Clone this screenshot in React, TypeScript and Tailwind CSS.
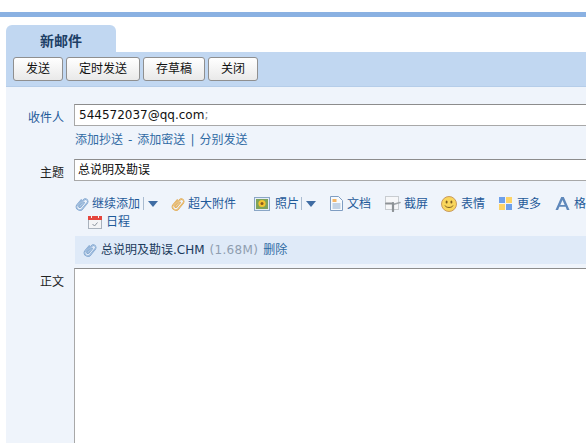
import type { ReactNode } from "react";

const font = "font-['DejaVu_Sans','Noto_Sans_CJK_SC',sans-serif]";

function Clip({ color = "#d5e3f3", dark = "#6f99c8" }: { color?: string; dark?: string }) {
  const d = "M1.5 4.5v6.2a3.2 3.2 0 0 0 6.4 0V3a2.3 2.3 0 0 0-4.6 0v7a1 1 0 0 0 2 0V4.5";
  return (
    <svg width="14" height="16" viewBox="0 0 14 16" fill="none" className="shrink-0">
      <g transform="translate(2.4 1.2) rotate(40 5 7)">
        <path d={d} stroke={dark} strokeWidth="1.5" strokeLinecap="round" />
        <path d={d} stroke={color} strokeWidth="0.5" strokeLinecap="round" />
      </g>
    </svg>
  );
}

function Caret({ barGap }: { barGap: string }) {
  return (
    <span className="flex items-center">
      <span className={`${barGap} mr-[3px] h-[13px] w-px bg-[#a9bbd0]`} />
      <svg width="10" height="6" viewBox="0 0 10 6" className="ml-[1px]">
        <path d="M0 0h10L5 6z" fill="#3f6ca3" />
      </svg>
    </span>
  );
}

function Photo() {
  return (
    <svg width="16" height="14" viewBox="0 0 16 14" className="shrink-0">
      <rect x="0.5" y="0.5" width="15" height="13" fill="#e6eef7" stroke="#8aa6c6" />
      <rect x="2" y="2" width="12" height="10" fill="#7fa35a" />
      <circle cx="8" cy="6.5" r="3.6" fill="#f4c430" />
      <circle cx="8" cy="6.5" r="1.5" fill="#8a5a1c" />
    </svg>
  );
}

function Doc() {
  return (
    <svg width="13" height="15" viewBox="0 0 13 15" className="shrink-0">
      <path d="M.5.5h8l4 4v10H.5z" fill="#f7fafd" stroke="#7f9dc2" />
      <rect x="2.5" y="3" width="4" height="3" fill="#f5b565" />
      <path d="M2.5 8h8M2.5 10h8M2.5 12h8" stroke="#8fabcc" />
    </svg>
  );
}

function Scissors() {
  return (
    <svg width="16" height="16" viewBox="0 0 16 16" className="shrink-0">
      <rect x="0.5" y="0.5" width="13" height="13" fill="#f6f7f9" stroke="#c8ccd0" />
      <path d="M1 7.5h7" stroke="#8d9296" strokeWidth="2" strokeLinecap="round" />
      <path d="M8 8.5 15 6.5" stroke="#a0a5a9" strokeWidth="1.6" strokeLinecap="round" />
      <path d="M8 7v8" stroke="#8d9296" strokeWidth="2.2" strokeLinecap="round" />
    </svg>
  );
}

function Smile() {
  return (
    <svg width="16" height="16" viewBox="0 0 16 16" className="shrink-0">
      <circle cx="8" cy="8" r="7.5" fill="#f9d65c" stroke="#c99a5f" />
      <ellipse cx="5.6" cy="6" rx="1" ry="1.5" fill="#7a5a20" />
      <ellipse cx="10.4" cy="6" rx="1" ry="1.5" fill="#7a5a20" />
      <path d="M4 9.5c1 2.6 7 2.6 8 0" stroke="#7a5a20" fill="none" />
    </svg>
  );
}

function Grid() {
  return (
    <svg width="13" height="13" viewBox="0 0 13 13" className="shrink-0">
      <rect width="6" height="6" fill="#6ea0ea" />
      <rect x="7" width="6" height="6" fill="#fdd467" />
      <rect y="7" width="6" height="6" fill="#fdd467" />
      <rect x="7" y="7" width="6" height="6" fill="#6ea0ea" />
    </svg>
  );
}

function LetterA() {
  return (
    <svg width="15" height="13" viewBox="0 0 15 13" className="shrink-0">
      <path d="M6.2 0h2.6l5.7 13h-2.6l-1.3-3.2H4.4L3.1 13H.5zM7.5 3 5.3 8h4.4z" fill="#5f88bb" />
    </svg>
  );
}

function Calendar() {
  return (
    <svg width="14" height="14" viewBox="0 0 14 14" className="shrink-0">
      <rect x="0.5" y="1.5" width="13" height="12" fill="#f3f4f6" stroke="#a9b2bd" />
      <rect x="0" y="1" width="14" height="4" fill="#e4453d" />
      <path d="M3.5 0v3M10.5 0v3" stroke="#f4f4f4" />
      <path d="m4.5 9 2 2 3-3.5" stroke="#8c949e" fill="none" />
    </svg>
  );
}

function Tool({ icon, label, className = "" }: { icon: ReactNode; label: string; className?: string }) {
  return (
    <span className={`flex items-center whitespace-nowrap text-[#1f5a99] ${className}`}>
      {icon}
      {label}
    </span>
  );
}

function ActionButton({ label, width }: { label: string; width: string }) {
  return (
    <button
      className={`${width} h-[24px] rounded-[3px] border border-[#8f8f8f] bg-gradient-to-b from-white to-[#e9e9e9] text-[12px] text-[#111]`}
    >
      {label}
    </button>
  );
}

function Row({ label, labelClass = "text-[#222] pt-[6px]", children }: { label: string; labelClass?: string; children: ReactNode }) {
  return (
    <div className="flex">
      <div className={`h-[22px] w-[58px] shrink-0 text-right text-[12px] ${labelClass}`}>{label}</div>
      <div className="ml-[10px] w-[530px] shrink-0">{children}</div>
    </div>
  );
}

export default function App() {
  return (
    <div className={`${font} h-[443px] w-[586px] overflow-hidden bg-white text-[12px]`}>
      <div className="mt-[12px] h-[5px] bg-[#8ab1e2]" />
      <div className="pl-[6px] pt-[8px]">
        <div className="flex h-[27px] w-[110px] items-center justify-center rounded-t-[6px] bg-[#c1d7f1] pt-[6px] text-[14px] font-bold text-[#1d3f66]">
          新邮件
        </div>
        <div className="flex h-[35px] gap-[3px] border-b border-[#b5cde9] bg-[#c1d7f1] pl-[7px] pt-[5px]">
          <ActionButton label="发送" width="w-[50px]" />
          <ActionButton label="定时发送" width="w-[74px]" />
          <ActionButton label="存草稿" width="w-[62px]" />
          <ActionButton label="关闭" width="w-[50px]" />
        </div>
        <div className="h-[356px] bg-[#eff4fb] pt-[17px]">
          <Row label="收件人" labelClass="text-[#1f5a99] pt-[5px]">
            <div className="flex h-[22px] items-center border border-[#a8a8a8] border-t-[#8c8c8c] bg-white pl-[4px] text-[12px] text-[#111]">
              544572037@qq.com<span className="text-[#888]">;</span>
            </div>
            <div className="mt-[5px] flex h-[17px] items-center pl-[1px] text-[12px] text-[#2f6aa3]">
              添加抄送<span className="mx-[5px]">-</span>添加密送<span className="mx-[5px]">|</span>分别发送
            </div>
          </Row>
          <div className="mt-[11px]">
            <Row label="主题" labelClass="text-[#222] pt-[5px]">
              <div className="flex h-[22px] items-center border border-[#a8a8a8] border-t-[#8c8c8c] bg-white pl-[3px] text-[12px] text-[#111]">
                总说明及勘误
              </div>
            </Row>
          </div>
          <div className="ml-[69px] mt-[13px] w-[520px]">
            <div className="flex h-[19px] items-center whitespace-nowrap">
              <Tool icon={<Clip />} label="继续添加" className="gap-[3px]" />
              <Caret barGap="ml-[3px]" />
              <Tool icon={<Clip color="#fbe3ad" dark="#dc9f42" />} label="超大附件" className="ml-[13px] gap-[3px]" />
              <Tool icon={<Photo />} label="照片" className="ml-[18px] gap-[5px]" />
              <Caret barGap="ml-[2px]" />
              <Tool icon={<Doc />} label="文档" className="ml-[14px] gap-[4px]" />
              <Tool icon={<Scissors />} label="截屏" className="ml-[14px] gap-[3px]" />
              <Tool icon={<Smile />} label="表情" className="ml-[13px] gap-[4px]" />
              <Tool icon={<Grid />} label="更多" className="ml-[14px] gap-[5px]" />
              <Tool icon={<LetterA />} label="格式" className="ml-[14px] gap-[4px]" />
            </div>
            <div className="flex h-[18px] items-center pl-[13px]">
              <Tool icon={<Calendar />} label="日程" className="gap-[4px]" />
            </div>
            <div className="mt-[5px] flex h-[28px] items-center bg-[#dfeaf8] pl-[8px]">
              <Clip />
              <span className="ml-[4px] text-[#1b3a5c]">总说明及勘误.CHM</span>
              <span className="ml-[5px] tracking-[0.3px] text-[#8f9eb0]">(1.68M)</span>
              <span className="ml-[5px] text-[#2f6aa3]">删除</span>
            </div>
          </div>
          <div className="mt-[4px]">
            <Row label="正文" labelClass="text-[#222] pt-[5px]">
              <div className="h-[200px] border border-[#a8a8a8] border-t-[#8c8c8c] bg-white" />
            </Row>
          </div>
        </div>
      </div>
    </div>
  );
}
